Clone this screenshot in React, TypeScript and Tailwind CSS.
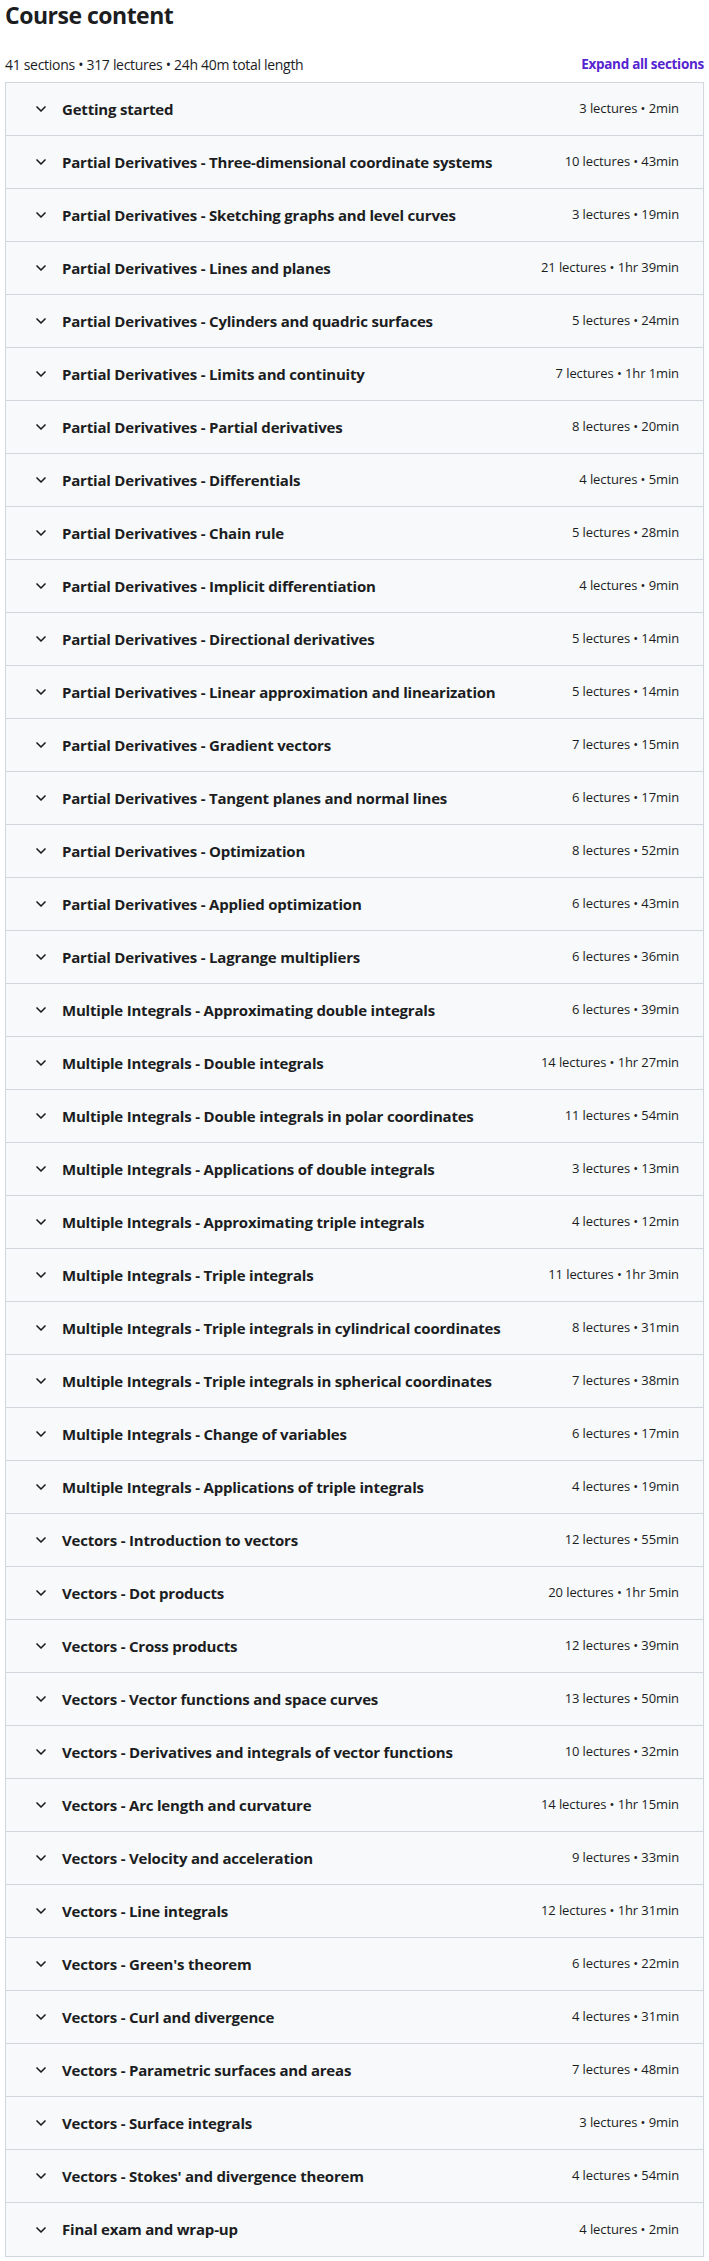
import React from 'react';
import { ChevronDown } from 'lucide-react';

const SECTIONS: [string, string][] = [
  ['Getting started', '3 lectures • 2min'],
  ['Partial Derivatives - Three-dimensional coordinate systems', '10 lectures • 43min'],
  ['Partial Derivatives - Sketching graphs and level curves', '3 lectures • 19min'],
  ['Partial Derivatives - Lines and planes', '21 lectures • 1hr 39min'],
  ['Partial Derivatives - Cylinders and quadric surfaces', '5 lectures • 24min'],
  ['Partial Derivatives - Limits and continuity', '7 lectures • 1hr 1min'],
  ['Partial Derivatives - Partial derivatives', '8 lectures • 20min'],
  ['Partial Derivatives - Differentials', '4 lectures • 5min'],
  ['Partial Derivatives - Chain rule', '5 lectures • 28min'],
  ['Partial Derivatives - Implicit differentiation', '4 lectures • 9min'],
  ['Partial Derivatives - Directional derivatives', '5 lectures • 14min'],
  ['Partial Derivatives - Linear approximation and linearization', '5 lectures • 14min'],
  ['Partial Derivatives - Gradient vectors', '7 lectures • 15min'],
  ['Partial Derivatives - Tangent planes and normal lines', '6 lectures • 17min'],
  ['Partial Derivatives - Optimization', '8 lectures • 52min'],
  ['Partial Derivatives - Applied optimization', '6 lectures • 43min'],
  ['Partial Derivatives - Lagrange multipliers', '6 lectures • 36min'],
  ['Multiple Integrals - Approximating double integrals', '6 lectures • 39min'],
  ['Multiple Integrals - Double integrals', '14 lectures • 1hr 27min'],
  ['Multiple Integrals - Double integrals in polar coordinates', '11 lectures • 54min'],
  ['Multiple Integrals - Applications of double integrals', '3 lectures • 13min'],
  ['Multiple Integrals - Approximating triple integrals', '4 lectures • 12min'],
  ['Multiple Integrals - Triple integrals', '11 lectures • 1hr 3min'],
  ['Multiple Integrals - Triple integrals in cylindrical coordinates', '8 lectures • 31min'],
  ['Multiple Integrals - Triple integrals in spherical coordinates', '7 lectures • 38min'],
  ['Multiple Integrals - Change of variables', '6 lectures • 17min'],
  ['Multiple Integrals - Applications of triple integrals', '4 lectures • 19min'],
  ['Vectors - Introduction to vectors', '12 lectures • 55min'],
  ['Vectors - Dot products', '20 lectures • 1hr 5min'],
  ['Vectors - Cross products', '12 lectures • 39min'],
  ['Vectors - Vector functions and space curves', '13 lectures • 50min'],
  ['Vectors - Derivatives and integrals of vector functions', '10 lectures • 32min'],
  ['Vectors - Arc length and curvature', '14 lectures • 1hr 15min'],
  ['Vectors - Velocity and acceleration', '9 lectures • 33min'],
  ['Vectors - Line integrals', '12 lectures • 1hr 31min'],
  ["Vectors - Green's theorem", '6 lectures • 22min'],
  ['Vectors - Curl and divergence', '4 lectures • 31min'],
  ['Vectors - Parametric surfaces and areas', '7 lectures • 48min'],
  ['Vectors - Surface integrals', '3 lectures • 9min'],
  ["Vectors - Stokes' and divergence theorem", '4 lectures • 54min'],
  ['Final exam and wrap-up', '4 lectures • 2min'],
];

function SectionRow({ title, meta }: { title: string; meta: string }) {
  return (
    <div className="h-[53px] flex items-center justify-between bg-[#f7f9fa] pl-[27px] pr-[24px]">
      <div className="flex items-center gap-[13px]">
        <ChevronDown className="w-[16px] h-[16px] text-[#1c1d1f]" strokeWidth={2.5} />
        <span className="text-[15px] font-bold text-[#1c1d1f] tracking-[-0.2px]">{title}</span>
      </div>
      <span className="text-[13px] text-[#1c1d1f] tracking-[-0.1px] whitespace-nowrap">{meta}</span>
    </div>
  );
}

export default function App() {
  return (
    <div className="bg-white px-[5px] pb-[6px] font-['Open_Sans',sans-serif] text-[#1c1d1f]">
      <h2 className="text-[23px] font-bold leading-[30px] tracking-[-0.5px]">Course content</h2>
      <div className="flex items-center justify-between mt-[24px] h-[20px]">
        <span className="text-[14px] tracking-[-0.3px]">41 sections • 317 lectures • 24h 40m total length</span>
        <button className="text-[13.5px] font-bold text-[#5624d0] tracking-[-0.3px]">Expand all sections</button>
      </div>
      <div className="mt-[8px] border border-[#d1d7dc] divide-y divide-[#d1d7dc]">
        {SECTIONS.map(([title, meta]) => (
          <SectionRow key={title} title={title} meta={meta} />
        ))}
      </div>
    </div>
  );
}
